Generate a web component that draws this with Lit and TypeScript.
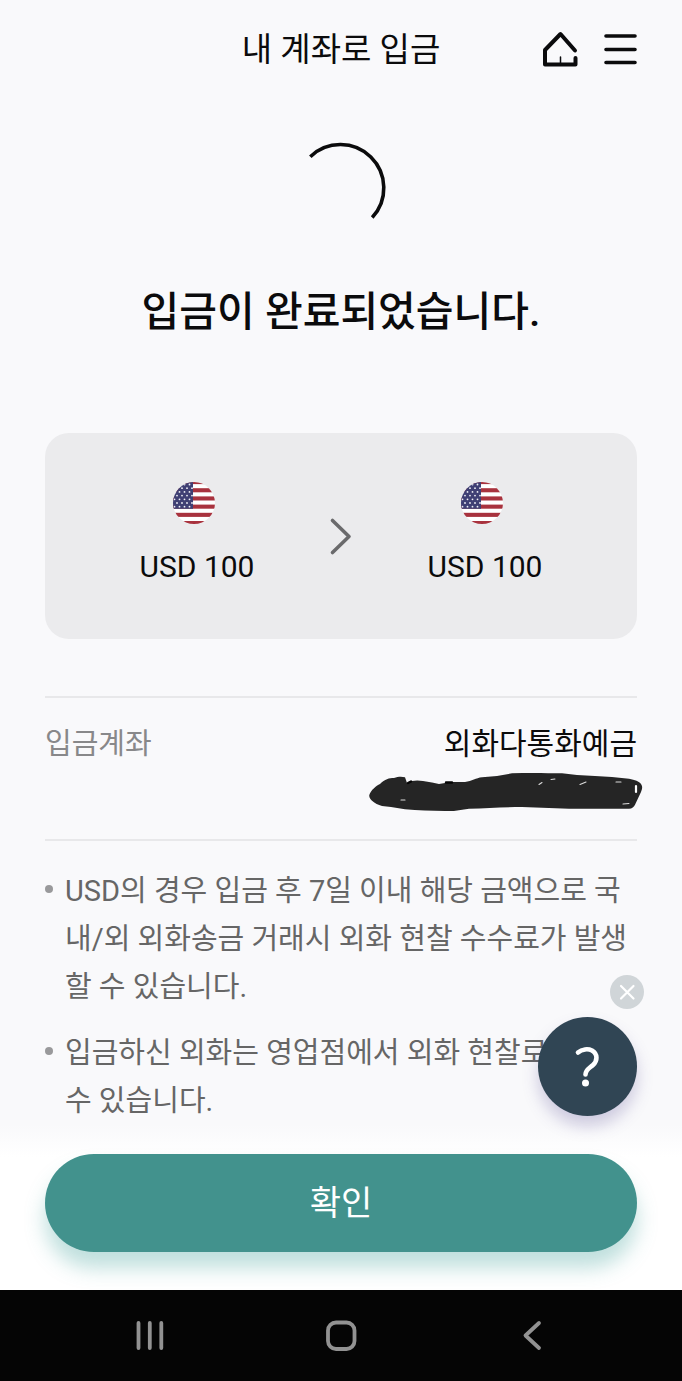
import { LitElement, html, css, svg } from "lit";
import { customElement, property } from "lit/decorators.js";

@customElement("usd-flag")
class UsdFlag extends LitElement {
  static styles = css`
    :host { display: block; width: 42px; height: 42px; border-radius: 50%; overflow: hidden; }
    .flag { display: block; width: 100%; height: 100%; }
  `;

  render() {
    const stripes = [0, 1, 2, 3, 4, 5];
    const stars: [number, number][] = [];
    for (let row = 0; row < 7; row++) {
      for (let col = 0; col < 4; col++) {
        stars.push([1.5 + col * 5 + (row % 2 ? 2.5 : 0), 2.5 + row * 3.7]);
      }
    }
    return html`
      <svg class="flag" viewBox="0 0 42 42" role="img" aria-label="미국">
        <rect width="42" height="42" fill="#fff"></rect>
        ${stripes.map((n) => svg`<rect y=${n * 8.2 - 2} width="42" height="4.1" fill="#a8323e"></rect>`)}
        <rect width="20" height="26.8" fill="#3f3f74"></rect>
        ${stars.map(([x, y]) => svg`<circle cx=${x} cy=${y} r="0.9" fill="#f0f0f6"></circle>`)}
      </svg>
    `;
  }
}

@customElement("money-side")
class MoneySide extends LitElement {
  @property() amount = "";

  static styles = css`
    :host { display: flex; flex-direction: column; align-items: center; gap: 24px; padding-bottom: 6px; }
    .flag { margin-right: 6px; }
    .amount { font-size: 30px; line-height: 38px; color: #0b0b0c; }
  `;

  render() {
    return html`<usd-flag class="flag"></usd-flag><span class="amount">${this.amount}</span>`;
  }
}

@customElement("app-root")
class AppRoot extends LitElement {
  static styles = css`
    :host {
      display: flex;
      flex-direction: column;
      position: relative;
      min-height: 100vh;
      background: #f9f9fb;
      color: #0b0b0c;
      font-family: Roboto, "Noto Sans CJK KR", sans-serif;
    }
    * { box-sizing: border-box; }
    svg { display: block; }
    button { padding: 0; border: 0; background: none; color: inherit; font: inherit; cursor: pointer; }
    .header {
      display: grid;
      grid-template-columns: 1fr auto 1fr;
      align-items: center;
      height: 100px;
      padding: 0 44px;
    }
    .title { grid-column: 2; margin: 0; font-size: 33px; font-weight: 400; line-height: 48px; }
    .actions { display: flex; justify-content: flex-end; gap: 26px; }
    .content { flex: 1; padding: 40px 45px 0; }
    .spinner { margin: 0 auto; }
    .done { margin: 48px 0 0; font-size: 41px; font-weight: 500; line-height: 60px; text-align: center; }
    .card {
      display: grid;
      grid-template-columns: 1fr 24px 1fr;
      align-items: center;
      height: 206px;
      margin-top: 91px;
      padding: 2px 20px 0;
      border-radius: 24px;
      background: #ebebed;
    }
    .account {
      display: flex;
      justify-content: space-between;
      height: 145px;
      margin: 57px 0 0;
      padding-top: 24px;
      border: solid #e8e8ea;
      border-width: 2px 0;
      font-size: 30px;
      line-height: 44px;
    }
    .label { color: #88888a; font-size: 29px; }
    .value { margin: 0; text-align: right; }
    .number { margin: 6px -8px 0 0; }
    .notes {
      display: flex;
      flex-direction: column;
      gap: 18px;
      margin: 26px 0 0;
      padding: 0;
      list-style: none;
      color: #666;
      font-size: 29px;
      line-height: 48px;
      word-break: break-all;
    }
    .note { display: flex; gap: 12px; }
    .note::before {
      content: "";
      flex: none;
      width: 8px;
      height: 8px;
      margin-top: 18px;
      border-radius: 50%;
      background: #99999b;
    }
    .footer {
      padding: 29px 45px 38px;
      background: linear-gradient(#f9f9fb, #fff 32px);
    }
    .confirm {
      display: block;
      width: 100%;
      height: 98px;
      padding-bottom: 6px;
      border-radius: 49px;
      background: #42928d;
      box-shadow: 0 16px 20px rgba(66, 160, 155, 0.34);
      color: #fff;
      font-size: 34px;
    }
    .help {
      position: absolute;
      right: 45px;
      bottom: 265px;
      width: 99px;
      height: 99px;
      border-radius: 50%;
      background: #304554;
      box-shadow: 0 10px 16px rgba(90, 80, 150, 0.28);
    }
    .close {
      position: absolute;
      right: 38px;
      bottom: 372px;
      width: 34px;
      height: 34px;
      border-radius: 50%;
      background: #d0d5d8;
    }
    .system {
      display: grid;
      grid-template-columns: repeat(3, 1fr);
      align-items: center;
      justify-items: center;
      height: 91px;
      padding: 0 54px;
      background: #050505;
    }
  `;

  render() {
    return html`
      <header class="header">
        <h1 class="title">내 계좌로 입금</h1>
        <div class="actions">
          <button aria-label="홈">
            <svg width="36" height="40" viewBox="0 0 36 40" fill="none" stroke="#0b0b0c" stroke-width="4" stroke-linecap="round">
              <path d="M33 20.5 18.5 4 3 20V34.5H33.5V28" stroke-linejoin="round"></path>
              <path d="M18.5 27V33" stroke-width="1.5"></path>
            </svg>
          </button>
          <button aria-label="메뉴">
            <svg width="34" height="40" viewBox="0 0 34 40" stroke="#0b0b0c" stroke-width="3.6" stroke-linecap="round">
              <path d="M2 6H31M2 19.5H31M2 32.5H31"></path>
            </svg>
          </button>
        </div>
      </header>

      <main class="content">
        <svg class="spinner" width="92" height="94" viewBox="0 0 92 94" fill="none" stroke="#0b0b0c" stroke-width="3.6">
          <path d="M15.3 16.7A43.4 43.4 0 0 1 77.2 77.5"></path>
        </svg>
        <h2 class="done">입금이 완료되었습니다.</h2>

        <section class="card">
          <money-side amount="USD 100"></money-side>
          <svg width="24" height="40" viewBox="0 0 24 40" fill="none" stroke="#6a6a6c" stroke-width="3.6" stroke-linecap="round" stroke-linejoin="round">
            <path d="M3.500 3.500 20 19.500 3.500 35.500"></path>
          </svg>
          <money-side amount="USD 100"></money-side>
        </section>

        <dl class="account">
          <dt class="label">입금계좌</dt>
          <dd class="value">
            외화다통화예금
            <svg class="number" width="276" height="42" viewBox="0 0 276 42">
              <path fill="#252525" d="M0.3 23C2 18 7 14 11 12 16 7 20 6 25 6 29 4.500 33 4.500 36 5.300L38 11C43 8 49 8 54 9L63 10.500 70 12 82 10 96 10C103 9 107 6 113 5.300L128 4 143 1.300C160 0.600 178 1 193 1.300L208 3 226 4 243 5 260 6.700C266 8 270 9 272 12 274 15 273 17 272 20L266 32.700C265 35 263 36.700 260 36.700H200L153 35C135 35 118 36 100 36.700 92 38 85 39.500 76 39 62 39 49 38.500 36 37.300L22 35 13 34C9 33 6 31 3 28.700 1 27 0 25 0.300 23Z"></path>
              <path d="M39 11 42 9.500M77 10.500H83" stroke="#050505" stroke-width="2.400" stroke-linecap="round"></path>
              <path d="M170 12.500 173 10.500M182 7.500 186 7M211 12.500 217 10M247 10H252M254 32 260 31.500M32 28H36" fill="none" stroke="#dcdcdc" stroke-width="1.100" stroke-linecap="round"></path>
              <path d="M267 14 267 20" stroke="#fff" stroke-width="2.200" stroke-linecap="round"></path>
            </svg>
          </dd>
        </dl>

        <ul class="notes">
          <li class="note"><span>USD의 경우 입금 후 7일 이내 해당 금액으로 국내/외 외화송금 거래시 외화 현찰 수수료가 발생할 수 있습니다.</span></li>
          <li class="note"><span>입금하신 외화는 영업점에서 외화 현찰로<br />수 있습니다.</span></li>
        </ul>
      </main>

      <footer class="footer">
        <button class="confirm">확인</button>
      </footer>

      <button class="close" aria-label="닫기">
        <svg width="34" height="34" viewBox="0 0 34 34" stroke="#fff" stroke-width="2.2" stroke-linecap="round">
          <path d="M11 11 23.500 23.500M23.500 11 11 23.500"></path>
        </svg>
      </button>
      <button class="help" aria-label="도움말">
        <svg width="99" height="99" viewBox="0 0 99 99" fill="none" stroke="#fff" stroke-width="4.6" stroke-linecap="round">
          <path d="M40 35.500C44 32 50 31.500 54 33.500 60 37 59.500 44 55 48 51 51.500 47.500 53 47.500 57.500"></path>
          <circle cx="47.5" cy="66" r="3.5" fill="#fff" stroke="none"></circle>
        </svg>
      </button>

      <nav class="system">
        <button aria-label="최근 앱">
          <svg width="32" height="32" viewBox="0 0 32 32" stroke="#929292" stroke-width="3.8" stroke-linecap="round">
            <path d="M4.5 3V28M15.8 3V28M27.3 3V28"></path>
          </svg>
        </button>
        <button aria-label="홈 화면">
          <svg width="32" height="32" viewBox="0 0 32 32" fill="none" stroke="#929292" stroke-width="3.8">
            <rect x="3" y="2.5" width="26.5" height="26.5" rx="8"></rect>
          </svg>
        </button>
        <button aria-label="뒤로">
          <svg width="32" height="32" viewBox="0 0 32 32" fill="none" stroke="#929292" stroke-width="3.8" stroke-linecap="round" stroke-linejoin="round">
            <path d="M23 3 9.500 15.500 23 28"></path>
          </svg>
        </button>
      </nav>
    `;
  }
}
